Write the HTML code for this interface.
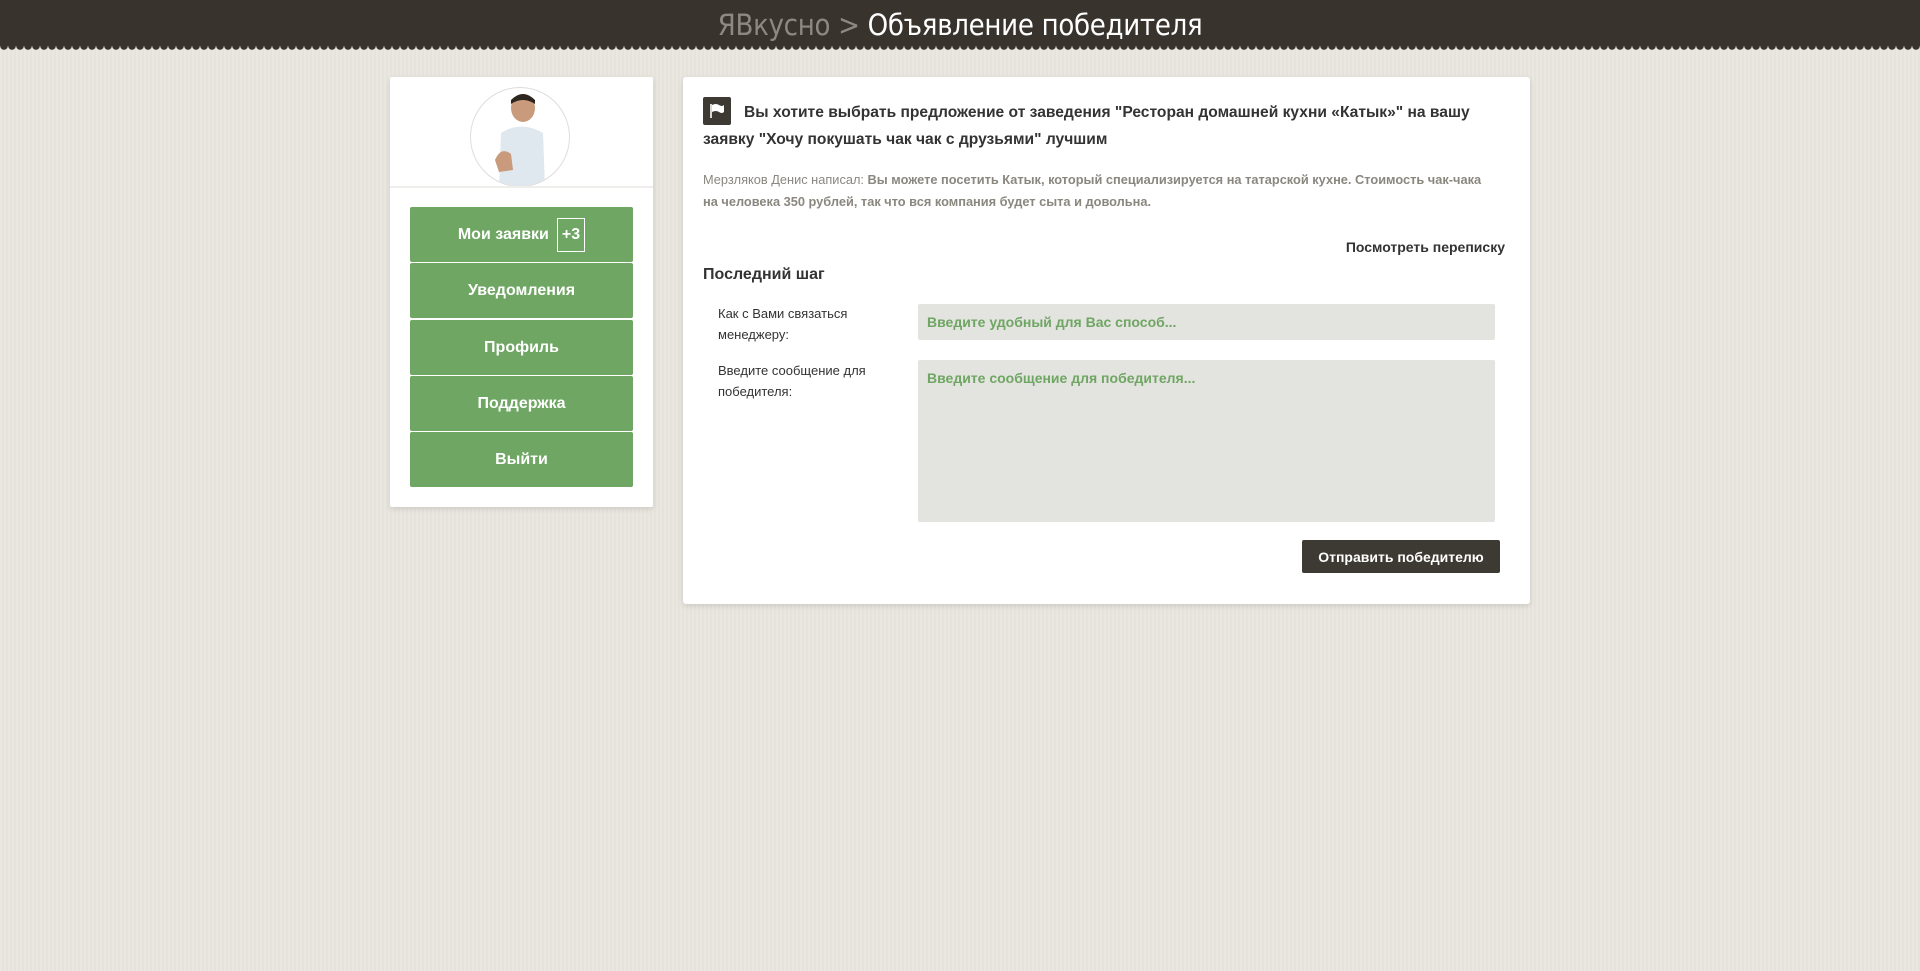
<!DOCTYPE html>
<html><head><meta charset="utf-8">
<style>
*{margin:0;padding:0;box-sizing:border-box}
body{width:1920px;height:971px;overflow:hidden;background:#e8e5de;background-image:repeating-linear-gradient(90deg,rgba(255,255,255,.08) 0 2px,rgba(0,0,0,.008) 2px 4px);font-family:"Liberation Sans",sans-serif;position:relative}
.hdr{position:absolute;left:0;top:0;width:1920px;height:46px;background:#38342d}
.zig{position:absolute;left:0;top:46px;width:1920px;height:5px;background:radial-gradient(circle at 4px 0,#38342d 3.5px,transparent 4px) 0 0/8px 5px repeat-x}
.title{position:absolute;left:0;width:1920px;top:8px;text-align:center;font-size:29px;color:#fff;font-family:"DejaVu Sans Condensed","Liberation Sans",sans-serif;font-weight:300;letter-spacing:-0.3px}
.title span{color:#8d8980}
.left{position:absolute;left:390px;top:77px;width:263px;height:430px;background:#fff;box-shadow:0 2px 6px rgba(0,0,0,.12);border-radius:2px}
.av{position:absolute;left:80px;top:10px;width:100px;height:100px;border-radius:50%;border:1px solid #ddd;overflow:hidden;background:#fff}
.sep{position:absolute;left:0;top:109px;width:263px;height:2px;background:#f0eeea}
.btn{position:absolute;left:20px;width:223px;height:55px;background:#6fa663;color:#fff;font-weight:bold;font-size:16px;display:flex;align-items:center;justify-content:center;border-radius:2px}
.badge{border:1px solid #fff;padding:7px 4px;margin-left:8px;font-size:16px}
.right{position:absolute;left:683px;top:77px;width:847px;height:527px;background:#fff;box-shadow:0 2px 6px rgba(0,0,0,.12);border-radius:3px}
.flag{position:absolute;left:20px;top:20px;width:28px;height:28px;background:#3d3a33;border-radius:2px}
.h{position:absolute;left:20px;top:22px;width:800px;font-size:15.6px;font-weight:bold;color:#333;line-height:27px;text-indent:41px}
.p{position:absolute;left:20px;top:92px;width:790px;font-size:12.8px;line-height:22px;color:#8a877f;font-weight:bold}
.p span{font-weight:normal}
.link{position:absolute;right:25px;top:162px;font-size:14px;font-weight:bold;color:#333}
.step{position:absolute;left:20px;top:189px;font-size:16px;font-weight:bold;color:#333}
.lbl{position:absolute;left:35px;font-size:13px;color:#333;line-height:21px;width:170px}
.in{position:absolute;left:235px;width:577px;background:#e3e3df;border-radius:2px;color:#6fa663;font-weight:bold;font-size:14px;padding:10px 9px}
.send{position:absolute;left:619px;top:463px;width:198px;height:33px;background:#3d3a33;color:#fff;font-weight:bold;font-size:14px;display:flex;align-items:center;justify-content:center;border-radius:2px}
</style></head><body>
<div class="hdr"></div><div class="zig"></div>
<div class="title"><span>ЯВкусно &gt; </span>Объявление победителя</div>
<div class="left">
 <div class="av"><svg width="100" height="100" viewBox="0 0 100 100"><ellipse cx="52" cy="20" rx="12" ry="14" fill="#c99a7b"/><path d="M40 12 Q52 0 64 12 L64 16 Q52 8 40 16Z" fill="#2d2520"/><path d="M28 100 L30 45 Q50 32 72 45 L74 100Z" fill="#dfe8ef"/><path d="M24 72 Q30 58 40 66 L42 82 L28 84Z" fill="#c99a7b"/></svg></div>
 <div class="sep"></div>
 <div class="btn" style="top:130px">Мои заявки<span class="badge">+3</span></div>
 <div class="btn" style="top:186px">Уведомления</div>
 <div class="btn" style="top:243px">Профиль</div>
 <div class="btn" style="top:299px">Поддержка</div>
 <div class="btn" style="top:355px">Выйти</div>
</div>
<div class="right">
 <div class="flag"><svg width="28" height="28" viewBox="0 0 28 28"><path d="M8 7 V21" stroke="#fff" stroke-width="1.6"/><path d="M9 8 Q13 6 16 8 Q19 10 21 8 V15 Q19 17 16 15 Q13 13 9 15Z" fill="#fff"/></svg></div>
 <div class="h">Вы хотите выбрать предложение от заведения "Ресторан домашней кухни «Катык»" на вашу заявку "Хочу покушать чак чак с друзьями" лучшим</div>
 <div class="p"><span>Мерзляков Денис написал:</span> Вы можете посетить Катык, который специализируется на татарской кухне. Стоимость чак-чака на человека 350 рублей, так что вся компания будет сыта и довольна.</div>
 <div class="link">Посмотреть переписку</div>
 <div class="step">Последний шаг</div>
 <div class="lbl" style="top:226px">Как с Вами связаться менеджеру:</div>
 <div class="in" style="top:227px;height:36px">Введите удобный для Вас способ...</div>
 <div class="lbl" style="top:283px">Введите сообщение для победителя:</div>
 <div class="in" style="top:283px;height:162px">Введите сообщение для победителя...</div>
 <div class="send">Отправить победителю</div>
</div>
</body></html>
